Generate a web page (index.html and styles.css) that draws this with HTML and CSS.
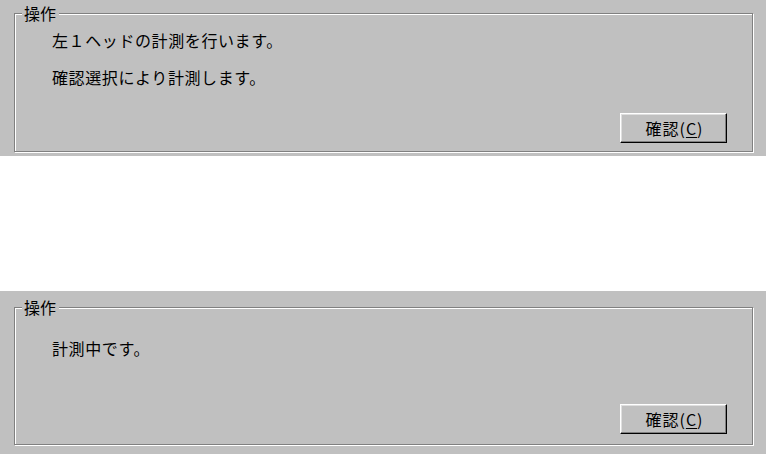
FILE: index.html
```html
<!DOCTYPE html>
<html lang="ja">
<head>
    <meta charset="UTF-8">
    <meta name="viewport" content="width=device-width, initial-scale=1.0">
    <title>操作</title>
    <link rel="stylesheet" href="styles.css">
</head>
<body>
    <div class="panel panel-first">
        <fieldset class="group">
            <legend class="group-title">操作</legend>
            <div class="messages">
                <p class="message">左１ヘッドの計測を行います。</p>
                <p class="message">確認選択により計測します。</p>
            </div>
            <div class="actions">
                <button class="btn">確認(<u>C</u>)</button>
            </div>
        </fieldset>
    </div>

    <div class="panel panel-second">
        <fieldset class="group">
            <legend class="group-title">操作</legend>
            <div class="messages">
                <p class="message">計測中です。</p>
            </div>
            <div class="actions">
                <button class="btn">確認(<u>C</u>)</button>
            </div>
        </fieldset>
    </div>
</body>
</html>
```

FILE: styles.css
```css
body {
    margin: 0;
    background-color: #fff;
    font-family: "Noto Sans CJK JP", "DejaVu Sans", sans-serif;
    color: #000;
}
.panel {
    background-color: #c0c0c0; /* ダイアログの灰色 */
    padding: 5px 13px 4px 14px;
}
.panel-second {
    margin-top: 135px;
    padding-top: 8px;
    padding-bottom: 9px;
}
.group {
    margin: 0;
    padding: 0;
    min-width: 0;
    border: 1px solid #808080;
    box-shadow: 1px 1px 0 #fff, inset 1px 1px 0 #fff; /* 溝の線 */
}
.group-title {
    margin-left: 7px;
    padding: 0 3px 0 2px;
    font-size: 16px;
    line-height: 17px;
    background-color: #c0c0c0;
}
.messages {
    padding: 8px 0 0 37px;
}
.message {
    margin: 0 0 17px 0;
    font-size: 16px;
    line-height: 20px;
    letter-spacing: 0.6px;
}
.message:last-child {
    margin-bottom: 0;
}
.panel-second .messages {
    padding-top: 22px;
}
.actions {
    display: flex;
    justify-content: flex-end;
    padding: 26px 25px 8px 0;
}
.panel-second .actions {
    padding-top: 46px;
    padding-bottom: 10px;
}
.btn {
    width: 107px;
    height: 30px;
    padding: 0 0 0 2px;
    font-family: inherit;
    font-size: 16px;
    line-height: 20px;
    letter-spacing: 1px;
    color: #000;
    background-color: #c0c0c0;
    border: 1px solid;
    border-color: #fff #000 #000 #fff;
    box-shadow: inset -1px -1px 0 #808080, inset 1px 1px 0 #dfdfdf;
    border-radius: 0;
}
.btn u {
    text-underline-offset: 2px;
}
```
